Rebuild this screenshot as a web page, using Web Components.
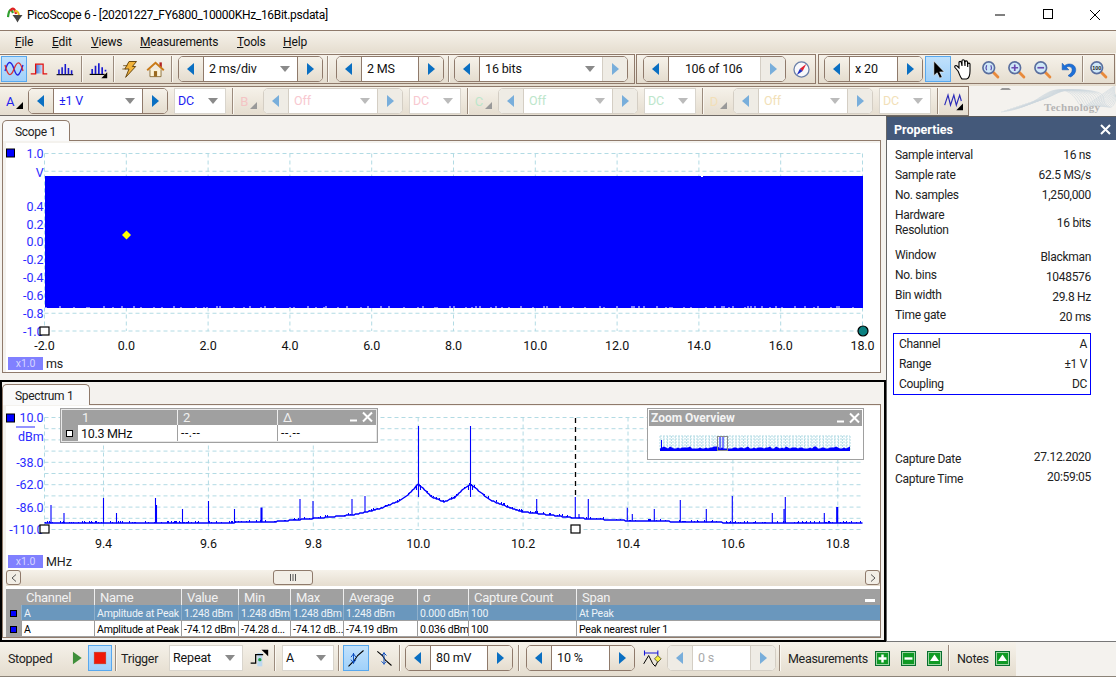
<!DOCTYPE html>
<html>
<head>
<meta charset="utf-8">
<title>PicoScope 6</title>
<style>
  html, body { margin: 0; padding: 0; background: #f4f2ee; }
  body { font: 12px Roboto, "Noto Sans", sans-serif; letter-spacing: -.3px; color: #111; width: 1116px; height: 677px; overflow: hidden; }
  .main { display: flex; height: 526px; }
  .left { width: 886px; flex: none; }
</style>
</head>
<body>

<ps-titlebar>PicoScope 6 - [20201227_FY6800_10000KHz_16Bit.psdata]</ps-titlebar>
<ps-menubar></ps-menubar>

<ps-toolrow h="33">
  <ps-group first w="635" pad="1">
    <ps-tool icon="scope" w="26" size="24" active></ps-tool>
    <ps-tool icon="block" w="24" size="18"></ps-tool>
    <ps-tool icon="bars" w="26" size="19"></ps-tool>
    <ps-sep l="4" r="1"></ps-sep>
    <ps-tool icon="bars2" w="27"></ps-tool>
    <ps-sep l="2" r="1"></ps-sep>
    <ps-tool icon="bolt" w="26"></ps-tool>
    <ps-tool icon="home" w="26" size="19"></ps-tool>
    <ps-sep l="3" r="5"></ps-sep>
    <ps-spinner w="145" value="2 ms/div" caret></ps-spinner>
    <ps-sep l="4" r="7"></ps-sep>
    <ps-spinner w="108" value="2 MS"></ps-spinner>
    <ps-sep l="4" r="4"></ps-sep>
    <ps-spinner w="174" value="16 bits" caret off-right></ps-spinner>
  </ps-group>
  <ps-group w="180" pad="6" style="margin-left:1px">
    <ps-spinner w="143" value="106 of 106" center off-right></ps-spinner>
    <ps-tool icon="compass" w="26" size="19" style="margin-left:2px"></ps-tool>
  </ps-group>
  <ps-group w="297" pad="5" style="margin-left:2px">
    <ps-spinner w="99" value="x 20"></ps-spinner>
    <ps-tool icon="pointer" w="26" active style="margin-left:2px"></ps-tool>
    <ps-tool icon="hand" w="26" size="24"></ps-tool>
    <ps-tool icon="zoomfit" w="26"></ps-tool>
    <ps-tool icon="zoomin" w="26"></ps-tool>
    <ps-tool icon="zoomout" w="26"></ps-tool>
    <ps-tool icon="undo" w="26"></ps-tool>
    <ps-sep l="1" r="1"></ps-sep>
    <ps-tool icon="zoom100" w="26"></ps-tool>
  </ps-group>
</ps-toolrow>

<ps-toolrow h="30" second>
  <ps-group first w="969" pad="0" low>
    <ps-chan color="#2222ee">A</ps-chan>
    <ps-spinner w="140" value="±1 V" caret color="#1c1cf0"></ps-spinner>
    <ps-combo w="52" color="#1c1cf0" style="margin-left:6px">DC</ps-combo>
    <ps-sep l="6" r="0"></ps-sep>
    <ps-chan color="#f4c4c4" faded>B</ps-chan>
    <ps-spinner w="140" value="Off" caret color="#f8c8d0" off-all></ps-spinner>
    <ps-combo w="52" color="#f8c8d0" style="margin-left:6px">DC</ps-combo>
    <ps-sep l="6" r="0"></ps-sep>
    <ps-chan color="#bde6cb" faded>C</ps-chan>
    <ps-spinner w="140" value="Off" caret color="#bde6cb" off-all></ps-spinner>
    <ps-combo w="52" color="#bde6cb" style="margin-left:6px">DC</ps-combo>
    <ps-sep l="6" r="0"></ps-sep>
    <ps-chan color="#f2dfb8" faded>D</ps-chan>
    <ps-spinner w="140" value="Off" caret color="#f2dfb8" off-all></ps-spinner>
    <ps-combo w="52" color="#f2dfb8" style="margin-left:6px">DC</ps-combo>
    <ps-sep l="6" r="0"></ps-sep>
    <ps-tool icon="wave" w="28"></ps-tool>
  </ps-group>
  <ps-logo></ps-logo>
</ps-toolrow>

<div class="main">
  <div class="left">
    <ps-view tab="Scope 1" tabw="68" kind="scope">
      <ps-scope-plot></ps-scope-plot>
    </ps-view>
    <ps-view tab="Spectrum 1" tabw="88" kind="spectrum" framed>
      <ps-spectrum-plot></ps-spectrum-plot>
      <ps-scrollbar></ps-scrollbar>
      <ps-measure-table></ps-measure-table>
    </ps-view>
  </div>
  <ps-properties>
    <ps-prop label="Sample interval">16 ns</ps-prop>
    <ps-prop label="Sample rate">62.5 MS/s</ps-prop>
    <ps-prop label="No. samples">1,250,000</ps-prop>
    <ps-prop label="Hardware Resolution" tall>16 bits</ps-prop>
    <ps-prop label="Window" low>Blackman</ps-prop>
    <ps-prop label="No. bins" low>1048576</ps-prop>
    <ps-prop label="Bin width" low>29.8 Hz</ps-prop>
    <ps-prop label="Time gate" low>20 ms</ps-prop>
    <ps-prop-box>
      <ps-prop label="Channel" inner>A</ps-prop>
      <ps-prop label="Range" inner>±1 V</ps-prop>
      <ps-prop label="Coupling" inner>DC</ps-prop>
    </ps-prop-box>
    <ps-prop label="Capture Date" high style="margin-top:54px">27.12.2020</ps-prop>
    <ps-prop label="Capture Time" high>20:59:05</ps-prop>
  </ps-properties>
</div>

<ps-statusbar>
  <ps-text w="61" style="margin-left:8px">Stopped</ps-text>
  <ps-tool icon="play" w="19"></ps-tool>
  <ps-tool icon="stop" w="24" active></ps-tool>
  <ps-sep l="3" r="4"></ps-sep>
  <ps-text w="48">Trigger</ps-text>
  <ps-combo w="74">Repeat</ps-combo>
  <ps-tool icon="trigstep" w="24" style="margin-left:4px"></ps-tool>
  <ps-sep l="3" r="6"></ps-sep>
  <ps-combo w="52">A</ps-combo>
  <ps-sep l="4" r="3"></ps-sep>
  <ps-tool icon="rising" w="26" active></ps-tool>
  <ps-tool icon="falling" w="25" style="margin-left:2px"></ps-tool>
  <ps-sep l="3" r="4"></ps-sep>
  <ps-spinner w="108" value="80 mV"></ps-spinner>
  <ps-sep l="5" r="6"></ps-sep>
  <ps-spinner w="109" value="10 %"></ps-spinner>
  <ps-tool icon="pretrig" w="24" style="margin-left:5px"></ps-tool>
  <ps-spinner w="109" value="0 s" off-all color="#aaa" style="margin-left:3px"></ps-spinner>
  <ps-sep l="3" r="7"></ps-sep>
  <ps-text w="87">Measurements</ps-text>
  <ps-green kind="plus"></ps-green>
  <ps-green kind="minus" style="margin-left:11px"></ps-green>
  <ps-green kind="up" style="margin-left:11px"></ps-green>
  <ps-sep l="6" r="7"></ps-sep>
  <ps-text w="38">Notes</ps-text>
  <ps-green kind="up"></ps-green>
</ps-statusbar>

<script>
const BROWN = '#8f7a6b';
const BAR_BG = 'linear-gradient(#f6f2ea, #e5ddcf)';

// every toolbar picture sits in a 24x24 box
const ICONS = {
  scope: `<path d="M3 14C6 3 9 3 12 12S17 20 21 8" fill="none" stroke="#2222dd" stroke-width="1.3"/><path d="M3 8C6 20 9 20 12 12S18 3 21 14" fill="none" stroke="#dd3030" stroke-width="1.3"/>`,
  block: `<defs><linearGradient id="b"><stop offset="0" stop-color="#3f7fe0"/><stop offset="1" stop-color="#d8e4f4"/></linearGradient></defs><rect x="8" y="6" width="9" height="12" fill="url(#b)"/><path d="M1 18.5H7.5V5.5H17.5V18.5H23" fill="none" stroke="#e01010" stroke-width="1.7"/>`,
  bars: `<path d="M2 18.5H23" stroke="#000" stroke-width="1.4"/><path d="M5 18V12M9 18V9M13 18V5M17 18V10M21 18V13" stroke="#1818d0" stroke-width="2"/>`,
  bars2: `<path d="M2 18.5H20" stroke="#000" stroke-width="1.4"/><path d="M5 18V12M9 18V8M13 18V5M17 18V10M21 15V13" stroke="#1818d0" stroke-width="2"/><path d="M23 16V23H16Z" fill="#000"/>`,
  bolt: `<path d="M12 3H21L16 9H20L8 22L12 12H7Z" fill="#f2b33a" stroke="#6b4a10" stroke-width="1.2"/><path d="M5 8H10M4 12H8" stroke="#6b4a10"/>`,
  home: `<path d="M17 3h3v6h-3z" fill="#b02020"/><path d="M5 12V21H19V12" fill="#fbf3d8" stroke="#7a5a20"/><path d="M1.5 13L12 3.5L22.5 13" fill="none" stroke="#c97a18" stroke-width="2.4"/><path d="M10 21V14H14V21" fill="#9a6a20"/>`,
  compass: `<circle cx="12" cy="12" r="9.5" fill="#f8f8fb" stroke="#6a7fa8" stroke-width="1.6"/><path d="M18 5L13.5 14L10 11Z" fill="#e02030"/><path d="M6 19L10 11L13.5 14Z" fill="#2030c0"/>`,
  pointer: `<path d="M7 2.5V20L11 16.5L14 23L17 21.5L14 15.5H19.5Z" fill="#000" stroke="#fff" stroke-width=".7"/>`,
  hand: `<path d="M6 14L3 10.5C2 9 4 8 5 9L7 11V5.5C7 4 9 4 9.3 5.5L10 9V3.8C10 2.4 12.3 2.4 12.5 3.8L13 9V4.8C13.2 3.5 15.4 3.5 15.5 5L15.7 10V7C16 5.8 18 5.8 18 7.2L18 14C18 18 16.5 21.5 14.5 22H10C8 20 7.5 17 6 14Z" fill="#fff" stroke="#000" stroke-width="1.1"/>`,
  play: `<path d="M5 4L16 12L5 20Z" fill="#3f8f3a"/>`,
  stop: `<rect x="5" y="5" width="14" height="14" fill="#f01808" stroke="#c04020" stroke-width=".6"/>`,
  undo: `<path d="M5 5V13H13L10 10C13 8 17 9.5 17 13C17 16 15 18 12 20L15 21.5C20 19 22 15 21 11C19.5 5.5 12 4.5 8 8Z" fill="#1c6fd8" stroke="#1250a8" stroke-width=".6"/>`,
  wave: `<path d="M2 17L6 5L9 17L13 5L16 17L20 5L22 12" fill="none" stroke="#2a2ab8" stroke-width="1.4"/><path d="M24 15V23H16Z" fill="#000"/>`,
  trigstep: `<path d="M10 6h6v16h-6z" fill="#bcd8f0"/><path d="M2 18H8V8H17" fill="none" stroke="#000" stroke-width="1.5"/><path d="M15 2H23V10Z" fill="#000"/><circle cx="13" cy="14" r="2" fill="#20a040"/>`,
  rising: `<path d="M3 22L10 15L14 9L21 3" fill="none" stroke="#000" stroke-width="1.3"/><path d="M9 6V19M6 11L9 7L12 11M6 14L9 18L12 14" fill="none" stroke="#1050c0" stroke-width="1.2"/>`,
  falling: `<path d="M4 4L10 9L14 15L21 21" fill="none" stroke="#000" stroke-width="1.3"/><path d="M12 5V20M9 9L12 6L15 9M9 16L12 19L15 16" fill="none" stroke="#1050c0" stroke-width="1.2"/>`,
  pretrig: `<path d="M3 6H19M3 3V9M19 3V9" stroke="#1818d8" stroke-width="1.3"/><path d="M2 19L8 9L13 19L16 22L19 16" fill="none" stroke="#000" stroke-width="1.2"/><path d="M19 9L23 13L19 17L15 13Z" fill="#f8f040" stroke="#000" stroke-width=".7"/>`
};
function glass(inner) {
  return `<path d="M15 15L21.5 21.5" stroke="#e88a3c" stroke-width="3.4" stroke-linecap="round"/><circle cx="10.5" cy="10.5" r="7" fill="#cfe8f8" stroke="#5a6e9e" stroke-width="2"/>${inner}`;
}
ICONS.zoomfit = glass('<path d="M8 7.5C7 9.5 7 11.5 8 13.5M13 7.5C14 9.5 14 11.5 13 13.5" fill="none" stroke="#5a4fb0" stroke-width="1.5"/>');
ICONS.zoomin = glass('<path d="M6.5 10.5H14.5M10.5 6.5V14.5" stroke="#6a4ab0" stroke-width="2"/>');
ICONS.zoomout = glass('<path d="M6.5 10.5H14.5" stroke="#6a4ab0" stroke-width="2"/>');
ICONS.zoom100 = glass('<text x="10.5" y="13" font-size="6.5" font-weight="700" text-anchor="middle" fill="#222" font-family="Liberation Sans" letter-spacing="0">100</text>');

class PsTitlebar extends HTMLElement {
  connectedCallback() {
    this.attachShadow({mode: 'open'}).innerHTML = `
      <style>
        :host { display: flex; align-items: center; height: 30px; background: #fff; border-bottom: 1px solid ${BROWN}; font-size: 12px; }
        svg { margin: 0 4px 0 7px; flex: none; }
        .txt { flex: 1; color: #000; }
        .win { display: flex; margin-right: -2px; }
        .win svg { margin: 0; width: 47px; height: 30px; }
      </style>
      <svg width="16" height="16" viewBox="0 0 16 16">
        <path d="M1 10C2 2 4 1 6 6" fill="none" stroke="#30a030" stroke-width="2.2"/>
        <path d="M3.5 4C5 0 8 1 9 7" fill="none" stroke="#e02020" stroke-width="2.2"/>
        <path d="M8 5C9 3 11 4 12 8" fill="none" stroke="#e8c020" stroke-width="2"/>
        <path d="M5.5 8H15.5L12.5 12L10.5 15.5L8.5 12Z" fill="#444"/>
      </svg>
      <span class="txt"><slot></slot></span>
      <span class="win">
        <svg viewBox="0 0 47 30"><path d="M18 15H28" stroke="#000"/></svg>
        <svg viewBox="0 0 47 30"><rect x="19.5" y="9.5" width="9" height="9" fill="none" stroke="#000"/></svg>
        <svg viewBox="0 0 47 30"><path d="M19 10L29 20M29 10L19 20" stroke="#000" fill="none"/></svg>
      </span>`;
  }
}

class PsMenubar extends HTMLElement {
  connectedCallback() {
    const items = [['F', 'ile', 37], ['E', 'dit', 39], ['V', 'iews', 49], ['M', 'easurements', 97], ['T', 'ools', 46], ['H', 'elp', 40]];
    this.attachShadow({mode: 'open'}).innerHTML = `
      <style>
        :host { display: flex; align-items: center; height: 22px; padding-left: 15px; background: ${BAR_BG}; box-sizing: border-box; color: #111; letter-spacing: -.15px; }
        span { flex: none; }
      </style>
      ${items.map(i => `<span style="width:${i[2]}px"><u>${i[0]}</u>${i[1]}</span>`).join('')}`;
  }
}

class PsToolrow extends HTMLElement {
  connectedCallback() {
    const second = this.hasAttribute('second');
    this.attachShadow({mode: 'open'}).innerHTML = `
      <style>
        :host { display: flex; align-items: stretch; height: ${this.getAttribute('h')}px; box-sizing: border-box;
                background: ${second ? '#f4f2ee' : BAR_BG}; padding-top: ${second ? 0 : 1}px; padding-bottom: ${second ? 0 : 2}px; }
      </style>
      <slot></slot>`;
  }
}

class PsGroup extends HTMLElement {
  connectedCallback() {
    const first = this.hasAttribute('first');
    const low = this.hasAttribute('low');
    this.attachShadow({mode: 'open'}).innerHTML = `
      <style>
        :host { display: flex; align-items: center; flex: none; box-sizing: border-box; width: ${this.getAttribute('w')}px;
                padding-left: ${this.getAttribute('pad')}px; background: ${BAR_BG};
                border: 1px solid ${BROWN}; ${first ? 'border-left: 0;' : ''} ${low ? 'border-bottom-color: #6f6a66;' : ''} }
      </style>
      <slot></slot>`;
  }
}

class PsSep extends HTMLElement {
  connectedCallback() {
    this.attachShadow({mode: 'open'}).innerHTML = `
      <style>
        :host { display: block; flex: none; width: 1px; height: 26px; background: #9b8b7d; border-right: 1px solid #fbf8f2;
                margin: 0 ${this.getAttribute('r')}px 0 ${this.getAttribute('l')}px; }
      </style>`;
  }
}

class PsTool extends HTMLElement {
  connectedCallback() {
    const active = this.hasAttribute('active');
    const size = this.getAttribute('size') || 20;
    this.attachShadow({mode: 'open'}).innerHTML = `
      <style>
        :host { display: flex; flex: none; align-items: center; justify-content: center; box-sizing: border-box; height: 26px;
                width: ${this.getAttribute('w')}px;
                ${active ? 'background: linear-gradient(#c2e2fc, #9fd0fa); outline: 1px solid #58a8ee; outline-offset: -1px;' : ''} }
      </style>
      <svg width="${size}" height="${size}" viewBox="0 0 24 24">${ICONS[this.getAttribute('icon')]}</svg>`;
  }
}

class PsSpinner extends HTMLElement {
  connectedCallback() {
    const w = this.getAttribute('w');
    const allOff = this.hasAttribute('off-all');
    const rightOff = allOff || this.hasAttribute('off-right');
    const caret = this.hasAttribute('caret');
    const center = this.hasAttribute('center');
    const color = this.getAttribute('color') || '#111';
    this.attachShadow({mode: 'open'}).innerHTML = `
      <style>
        :host { display: flex; flex: none; box-sizing: border-box; height: 26px; width: ${w}px; overflow: hidden;
                border: 1px solid ${allOff ? '#d4cec4' : BROWN}; border-radius: 5px; background: #fff; }
        .b { flex: none; width: 24px; display: flex; align-items: center; justify-content: center; background: ${BAR_BG}; }
        .b.off { background: #efece5; }
        .l { border-right: 1px solid ${allOff ? '#d4cec4' : BROWN}; }
        .r { border-left: 1px solid ${rightOff ? '#d4cec4' : BROWN}; }
        .v { flex: 1; display: flex; align-items: center; padding: 0 7px 2px 5px; color: ${color}; min-width: 0; font-size: 12.5px;
             letter-spacing: ${center ? '-.5px' : '-.15px'}; word-spacing: ${center ? '1px' : '0'}; justify-content: ${center ? 'center' : 'flex-start'}; }
        .t { flex: 1; }
        .c { flex: none; width: 0; height: 0; border: 5.5px solid transparent; border-top: 6px solid ${allOff ? '#bbb' : '#8a8a8a'}; border-bottom: 0; margin-top: 2px; }
      </style>
      <div class="b l ${allOff ? 'off' : ''}"><svg width="8" height="12"><path d="M7 0V12L0 6Z" fill="${allOff ? '#78aedb' : '#0a6fc2'}"/></svg></div>
      <div class="v"><span class="${center ? '' : 't'}">${this.getAttribute('value')}</span>${caret ? '<span class="c"></span>' : ''}</div>
      <div class="b r ${rightOff ? 'off' : ''}"><svg width="8" height="12"><path d="M1 0V12L8 6Z" fill="${rightOff ? '#78aedb' : '#0a6fc2'}"/></svg></div>`;
  }
}

class PsCombo extends HTMLElement {
  connectedCallback() {
    const color = this.getAttribute('color') || '#111';
    this.attachShadow({mode: 'open'}).innerHTML = `
      <style>
        :host { display: flex; flex: none; align-items: center; box-sizing: border-box; height: 26px; width: ${this.getAttribute('w')}px;
                background: #fff; border: 1px solid #d9d5cd; color: ${color}; padding: 0 7px 2px 3px; font-size: 12.5px; letter-spacing: -.15px; }
        .t { flex: 1; }
        .c { width: 0; height: 0; border: 5.5px solid transparent; border-top: 6px solid ${color === '#111' || color === '#1c1cf0' ? '#8a8a8a' : '#bbb'}; border-bottom: 0; margin-top: 2px; }
      </style>
      <span class="t"><slot></slot></span><span class="c"></span>`;
  }
}

class PsChan extends HTMLElement {
  connectedCallback() {
    const faded = this.hasAttribute('faded');
    this.attachShadow({mode: 'open'}).innerHTML = `
      <style>
        :host { display: flex; flex: none; box-sizing: border-box; width: ${faded ? 29 : 28}px; height: 26px; align-items: center;
                justify-content: ${faded ? 'flex-end' : 'flex-start'}; padding: ${faded ? '0 15px 0 0' : '0 0 0 6px'};
                color: ${this.getAttribute('color')}; font-size: 13px; }
        svg { margin: 8px 0 0 2px; flex: none; }
      </style>
      <slot></slot><svg width="7" height="7" style="${faded ? 'margin-right:-9px' : ''}"><path d="M7 0V7H0Z" fill="${faded ? '#999' : '#000'}"/></svg>`;
  }
}

class PsLogo extends HTMLElement {
  connectedCallback() {
    let curves = '';
    for (let i = 0; i < 12; i++) {
      curves += `<path d="M${2 + i * 3} ${26 - i}C${38 + i * 2} ${22 - i}, ${44 + i} 2, ${62 + i * 2} 4S${78 + i * 2} ${24 - i}, ${86 + i * 2} 20S${108 + i} 4, 116 ${i}" fill="none" stroke="#cdd6de" stroke-width=".6"/>`;
    }
    this.attachShadow({mode: 'open'}).innerHTML = `
      <style>
        :host { display: block; flex: 1; background: #f4f2ee; }
        svg { display: block; }
        text { font: 700 11px "Liberation Serif", serif; fill: #b4b4b4; letter-spacing: .3px; }
      </style>
      <svg width="147" height="30" viewBox="0 0 147 30">
        <g transform="translate(30 0)">${curves}</g>
        <path d="M33 2H40L42 4H31Z" fill="#999"/>
        <text x="75" y="25">Technology</text>
      </svg>`;
  }
}

class PsView extends HTMLElement {
  connectedCallback() {
    const framed = this.hasAttribute('framed');
    this.attachShadow({mode: 'open'}).innerHTML = `
      <style>
        :host { display: block; box-sizing: border-box; background: #f4f2ee;
                ${framed ? 'height: 262px; border: 2px solid #000; padding-top: 2px;' : 'height: 264px; padding: 4px 0 0 2px;'} }
        .tab { box-sizing: border-box; width: ${this.getAttribute('tabw')}px; height: 21px; margin-bottom: -1px; position: relative; z-index: 1;
               display: flex; align-items: center; padding: 2px 0 0 12px; color: #222; background: #fafafa;
               border: 1px solid ${BROWN}; border-bottom: 0; border-radius: 5px 5px 0 0; }
        .panel { box-sizing: border-box; width: 879px; border: 1px solid ${BROWN}; padding: ${framed ? 1 : 2}px 0 0 3px; background: #f4f2ee; }
      </style>
      <div class="tab">${this.getAttribute('tab')}</div>
      <div class="panel"><slot></slot></div>`;
  }
}

// small shared helpers for the two plots, coordinates are window pixels
function dashes(d) {
  return `<path d="${d}" stroke="#b2dbe4" stroke-dasharray="4 3" fill="none"/>`;
}
function label(x, y, s, anchor, fill) {
  return `<text x="${x}" y="${y + 4.5}" text-anchor="${anchor}" fill="${fill}">${s}</text>`;
}
function handle(x, y) {
  return `<rect x="${x - 4.5}" y="${y - 4}" width="9" height="8" fill="#fff" stroke="#000" stroke-width="1.2"/>`;
}
function chip(y, unit) {
  return `<rect x="8" y="${y}" width="35" height="13" fill="#8080ff"/>` +
    `<text x="25.5" y="${y + 10}" text-anchor="middle" font-size="10.5" fill="#d5d5ff">x1.0</text>` + label(46, y + 6.5, unit, 'start', '#222');
}
function channelSquare(y) {
  return `<rect x="6.5" y="${y}" width="8" height="8" fill="#0000ff" stroke="#000"/>`;
}
function random(seed) {
  let s = seed;
  return () => { s = (s * 1664525 + 1013904223) % 4294967296; return s / 4294967296; };
}
const PLOT_STYLE = `<style>:host { display: block; } svg { display: block; font-size: 12.5px; letter-spacing: -.1px; } </style>`;
const AXIS_BLUE = '#2b2bff';

class PsScopePlot extends HTMLElement {
  connectedCallback() {
    const xs = [], ys = [];
    for (let i = 0; i <= 10; i++) { xs.push(44.5 + i * 81.8); ys.push(153.5 + i * 17.75); }
    const rnd = random(7);
    let ticks = '';
    for (let x = 46; x < 862; x += 2 + Math.floor(rnd() * 14)) {
      ticks += `M${x} 308v-${1 + Math.floor(rnd() * 2)}`;
    }
    const yl = [[153, '1.0'], [172, 'V'], [206, '0.4'], [224, '0.2'], [241, '0.0'], [259, '-0.2'], [277, '-0.4'], [295, '-0.6'], [313, '-0.8'], [331, '-1.0']];
    const xl = ['-2.0', '0.0', '2.0', '4.0', '6.0', '8.0', '10.0', '12.0', '14.0', '16.0', '18.0'];
    this.attachShadow({mode: 'open'}).innerHTML = PLOT_STYLE + `
      <svg width="874" height="229" viewBox="6 143 874 229">
        <rect x="6" y="143" width="874" height="229" fill="#fff"/>
        ${dashes(xs.map(x => `M${x} 153.5V331`).join('') + ys.map(y => `M44.5 ${y}H862.5`).join(''))}
        <rect x="45" y="176" width="818" height="132" fill="#0000ff"/>
        <path d="${ticks}" stroke="#fff" fill="none"/>
        <path d="M701 176.5h2" stroke="#fff"/>
        <path d="M126.5 230.5L131 235L126.5 239.5L122 235Z" fill="#ffff00"/>
        ${channelSquare(149)}
        ${yl.map(l => label(43.5, l[0], l[1], 'end', AXIS_BLUE)).join('')}
        ${xl.map((s, i) => label(xs[i], 345, s, 'middle', '#111')).join('')}
        ${handle(44.5, 331)}
        <circle cx="863" cy="331" r="5" fill="#0a8080" stroke="#000" stroke-width="1.2"/>
        ${chip(357, 'ms')}
      </svg>`;
  }
}

const SKIRT = [[45, 523.3], [200, 523], [270, 522], [313, 518.5], [352, 515], [380, 508.7], [400, 500.5], [410, 493], [418.3, 484], [425, 490], [432, 497], [444, 501.7], [454, 498], [462, 490], [470.3, 484], [479, 491], [490, 500], [513, 509], [522, 511.7], [550, 515], [575, 518], [628, 520.7], [680, 521.7], [733, 522.7], [863, 523]];
const SPIKES = [[51, 505], [64, 513], [103.5, 498], [116.5, 513], [155.5, 498], [156.5, 505], [182.5, 509], [208.5, 501], [234.5, 509], [261, 507.5], [262, 507.5], [300, 499], [313, 501], [352, 499], [365, 496], [536.7, 499], [575.3, 497], [579, 514], [588.3, 499], [627.3, 507.7], [632.3, 514], [654.3, 509], [680.3, 500], [706.3, 509], [732.3, 496], [772.3, 513], [785.3, 497], [784, 509], [824.3, 513], [836.7, 507], [837.7, 507]];

function skirtAt(x) {
  for (let i = 1; i < SKIRT.length; i++) {
    if (x <= SKIRT[i][0]) {
      const a = SKIRT[i - 1], b = SKIRT[i];
      return a[1] + (b[1] - a[1]) * (x - a[0]) / (b[0] - a[0]);
    }
  }
  return 523;
}

class PsSpectrumPlot extends HTMLElement {
  connectedCallback() {
    const vx = [], ys = [];
    for (let i = 0; i < 8; i++) vx.push(103.5 + i * 104.9);
    for (let i = 0; i <= 10; i++) ys.push(417.5 + i * 11.2);
    const rnd = random(11);
    let base = 'M45 ' + skirtAt(45).toFixed(1), grass = '', spikes = '';
    for (let x = 45; x <= 863; x += 1.5) base += `L${x} ${Math.round(skirtAt(x))}`;
    for (let x = 45; x <= 863; x++) {
      if (rnd() < 0.3) grass += `M${x}.5 ${skirtAt(x).toFixed(0)}v-${1 + Math.floor(rnd() * 2)}`;
    }
    SPIKES.forEach(s => { spikes += `M${s[0]} ${skirtAt(s[0])}V${s[1]}`; });
    const yl = [[417, '10.0'], [436, 'dBm'], [462, '-38.0'], [484, '-62.0'], [507, '-86.0'], [529, '-110.0']];
    const xl = ['9.4', '9.6', '9.8', '10.0', '10.2', '10.4', '10.6', '10.8'];
    this.attachShadow({mode: 'open'}).innerHTML = PLOT_STYLE + `
      <style>
        :host { position: relative; }
        ps-ruler-legend { position: absolute; left: 54px; top: 2px; }
        ps-zoom-overview { position: absolute; left: 641px; top: 2px; }
      </style>
      <svg width="874" height="164" viewBox="6 406 874 164">
        <rect x="6" y="406" width="874" height="164" fill="#fff"/>
        ${dashes(ys.map(y => `M44.5 ${y}H863`).join('') + vx.map(x => `M${x} 417.5V529.5`).join('') + 'M44.5 417.5V529.5')}
        <path d="M575.5 418V497" stroke="#000" stroke-width="1.3" stroke-dasharray="5 4"/>
        <path d="${grass}" stroke="#0000ff" fill="none"/>
        <path d="${base}" stroke="#0000ff" stroke-width="1.5" fill="none"/>
        <path d="${spikes}" stroke="#0000ff" stroke-width="1.1" fill="none"/>
        <path d="M418.5 426V497M470.5 426V497M416.5 485V490M420.5 485V490M468.5 485V490M472.5 485V490" stroke="#0000ff" stroke-width="1.1" fill="none"/>
        ${channelSquare(414)}
        <path d="M16 427H35" stroke="#2b2bff"/>
        ${yl.map(l => label(43.5, l[0], l[1], 'end', AXIS_BLUE)).join('')}
        ${xl.map((s, i) => label(vx[i], 543, s, 'middle', '#111')).join('')}
        ${handle(44.5, 529)}
        ${handle(575.5, 529)}
        ${chip(555, 'MHz')}
      </svg>
      <ps-ruler-legend></ps-ruler-legend>
      <ps-zoom-overview></ps-zoom-overview>`;
  }
}

const MINI_CLOSE = `<svg width="24" height="12" viewBox="0 0 24 12"><path d="M1 9.5H8" stroke="#fff" stroke-width="2"/><path d="M14 1.5L23 10.5M23 1.5L14 10.5" stroke="#fff" stroke-width="2"/></svg>`;

class PsRulerLegend extends HTMLElement {
  connectedCallback() {
    this.attachShadow({mode: 'open'}).innerHTML = `
      <style>
        :host { display: grid; grid-template-columns: 16px 100px 100px 100px; grid-template-rows: 16px 16px; box-sizing: border-box; width: 318px; height: 35px;
                border: 1px solid #a0a0a0; outline: 1px solid #e8e8e8; outline-offset: -2px; background: #a0a0a0; color: #111; }
        div { display: flex; align-items: center; padding-left: 3px; box-sizing: border-box; }
        .h { color: #f0f0f0; border-left: 1px solid #eee; font-size: 13px; padding-left: 5px; justify-content: space-between; padding-right: 4px; }
        .h.first { border-left: 0; }
        .c { background: #fff; border-left: 1px solid #a0a0a0; }
        .d { letter-spacing: .6px; }
        .k { justify-content: center; padding: 0; }
        .s { width: 5px; height: 5px; background: #fff; border: 1px solid #000; }
      </style>
      <div></div><div class="h first">1</div><div class="h">2</div><div class="h">Δ ${MINI_CLOSE}</div>
      <div class="k"><span class="s"></span></div><div class="c" style="font-size:12.5px">10.3 MHz</div><div class="c d">--.--</div><div class="c d">--.--</div>`;
  }
}

class PsZoomOverview extends HTMLElement {
  connectedCallback() {
    const rnd = random(3);
    let band = 'M660 451';
    for (let x = 660; x <= 850; x += 2) band += `L${x} ${448.5 - Math.floor(rnd() * 2.4)}`;
    band += 'L850 451Z';
    const vs = [], hs = [436, 439, 442, 445, 448];
    for (let x = 660; x <= 850; x += 3.8) vs.push(x);
    this.attachShadow({mode: 'open'}).innerHTML = `
      <style>
        :host { display: block; box-sizing: border-box; width: 217px; height: 52px; background: #fff; border: 1px solid #a0a0a0; padding: 1px; }
        .t { display: flex; align-items: center; justify-content: space-between; height: 16px; background: #a0a0a0; color: #f4f4f4; font-weight: 700; padding: 0 2px 0 2px; font-size: 12px; letter-spacing: 0; }
        svg.m { display: block; }
      </style>
      <div class="t"><span>Zoom Overview</span>${MINI_CLOSE}</div>
      <svg class="m" width="213" height="32" viewBox="649 426 213 32">
        <path d="${vs.map(x => `M${x} 436V451`).join('')}${hs.map(y => `M660 ${y}H850`).join('')}" stroke="#b2dbe4" stroke-dasharray="2 1" fill="none"/>
        <path d="${band}" fill="#0000ff"/>
        <path d="M661.5 448V440M720 448V436M723 448V436" stroke="#0000ff"/>
        <rect x="717.5" y="436.5" width="10" height="14" fill="none" stroke="#888"/>
      </svg>`;
  }
}

class PsScrollbar extends HTMLElement {
  connectedCallback() {
    const btn = 'flex: none; box-sizing: border-box; width: 15px; height: 15px; border: 1px solid ' + BROWN + '; border-radius: 3px; background: #f2eee6; display: flex; align-items: center; justify-content: center;';
    this.attachShadow({mode: 'open'}).innerHTML = `
      <style>
        :host { display: flex; align-items: flex-start; width: 874px; height: 16px; box-sizing: border-box; background: ${BAR_BG}; margin-bottom: 3px; box-shadow: 0 3px 0 #fff; }
        .b { ${btn} }
        .th { ${btn} width: 40px; margin-left: 252px; }
        .sp { flex: 1; }
      </style>
      <div class="b"><svg width="6" height="8"><path d="M5 .5L1 4L5 7.5" fill="none" stroke="#555"/></svg></div>
      <div class="th"><svg width="8" height="7"><path d="M1.5 0V7M4 0V7M6.5 0V7" stroke="#555"/></svg></div>
      <div class="sp"></div>
      <div class="b"><svg width="6" height="8"><path d="M1 .5L5 4L1 7.5" fill="none" stroke="#555"/></svg></div>`;
  }
}

class PsMeasureTable extends HTMLElement {
  connectedCallback() {
    const heads = ['Channel', 'Name', 'Value', 'Min', 'Max', 'Average', 'σ', 'Capture Count', 'Span'];
    const rows = [
      ['A', 'Amplitude at Peak', '1.248 dBm', '1.248 dBm', '1.248 dBm', '1.248 dBm', '0.000 dBm', '100', 'At Peak'],
      ['A', 'Amplitude at Peak', '-74.12 dBm', '-74.28 d...', '-74.12 dB...', '-74.19 dBm', '0.036 dBm', '100', 'Peak nearest ruler 1']
    ];
    const key = '<div class="k"><span class="s"></span></div>';
    this.attachShadow({mode: 'open'}).innerHTML = `
      <style>
        :host { display: grid; grid-template-columns: 15px 73px 87px 57px 52px 53px 74px 51px 108px 304px; grid-template-rows: 16px 16px 16px; width: 874px; height: 48px; background: #a0a0a0; box-shadow: 0 -3px 0 #fff; }
        div { display: flex; align-items: center; box-sizing: border-box; white-space: nowrap; overflow: hidden; }
        .h { color: #f2f2f2; font-size: 13px; padding-left: 5px; border-left: 1px solid #eee; position: relative; }
        .h.f { border-left: 0; padding-left: 5px; }
        .h .min { position: absolute; right: 5px; top: 10px; width: 10px; height: 3px; background: #fff; }
        .r1 { background: #6a97bd; color: #edf3f8; }
        .r2 { background: #fff; color: #000; }
        .c { font-size: 10.5px; letter-spacing: -.2px; padding: 1px 0 0 2px; border-left: 1px solid #9c9c9c; margin-bottom: 1px; }
        .r1.c { border-left-color: #8fb0cc; }
        .k { justify-content: center; }
        .s { width: 5px; height: 5px; background: #0000ff; border: 1px solid #000; }
      </style>
      <div></div>${heads.map((h, i) => `<div class="h ${i === 0 ? 'f' : ''}">${h}${i === 8 ? '<span class="min"></span>' : ''}</div>`).join('')}
      ${rows.map((r, n) => key + r.map(c => `<div class="c r${n + 1}">${c}</div>`).join('')).join('')}`;
  }
}

class PsProperties extends HTMLElement {
  connectedCallback() {
    this.attachShadow({mode: 'open'}).innerHTML = `
      <style>
        :host { display: block; flex: 1; box-sizing: border-box; background: #fff; border-left: 1px solid #666; border-top: 1px solid #5c5c5c; border-bottom: 1px solid #777; }
        .h { display: flex; align-items: center; justify-content: space-between; box-sizing: border-box; height: 23px; padding: 1px 5px 0 7px; background: #44597a; color: #fff; font-weight: 700; font-size: 12.5px; letter-spacing: 0; }
        .b { padding: 5px 25px 0 8px; }
      </style>
      <div class="h"><span>Properties</span><svg width="11" height="11"><path d="M1 1L10 10M10 1L1 10" stroke="#fff" stroke-width="2"/></svg></div>
      <div class="b"><slot></slot></div>`;
  }
}

class PsProp extends HTMLElement {
  connectedCallback() {
    const tall = this.hasAttribute('tall');
    const shift = this.hasAttribute('low') ? 'padding-top: 3px;' : this.hasAttribute('high') ? 'padding-bottom: 4px;' : '';
    const inner = this.hasAttribute('inner');
    this.attachShadow({mode: 'open'}).innerHTML = `
      <style>
        :host { display: flex; align-items: center; justify-content: space-between; height: ${tall ? 30 : 20}px; ${tall ? 'margin: 2.5px 0 7.5px;' : ''} ${inner ? 'padding: 0 3px 0 5px;' : ''} color: #222; }
        .l { width: ${tall ? '80px' : 'auto'}; line-height: 15px; }
        .v { ${shift} }
      </style>
      <span class="l">${this.getAttribute('label')}</span><span class="v"><slot></slot></span>`;
  }
}

class PsPropBox extends HTMLElement {
  connectedCallback() {
    this.attachShadow({mode: 'open'}).innerHTML = `
      <style>
        :host { display: block; box-sizing: border-box; margin: 8px 0 0 -2px; height: 62px; border: 1px solid #0000ff; }
      </style>
      <slot></slot>`;
  }
}

class PsStatusbar extends HTMLElement {
  connectedCallback() {
    this.attachShadow({mode: 'open'}).innerHTML = `
      <style>
        :host { display: flex; align-items: center; height: 35px; box-sizing: border-box; padding-bottom: 2px; background: linear-gradient(90deg, transparent 1016px, #f4f2ee 1016px), ${BAR_BG}; border-bottom: 1px solid #8b8378; }
      </style>
      <slot></slot>`;
  }
}

class PsText extends HTMLElement {
  connectedCallback() {
    this.attachShadow({mode: 'open'}).innerHTML = `
      <style>:host { display: block; flex: none; width: ${this.getAttribute('w')}px; color: #222; font-size: 12.5px; }</style><slot></slot>`;
  }
}

class PsGreen extends HTMLElement {
  connectedCallback() {
    const marks = {
      plus: '<path d="M7.5 3.5V11.5M3.5 7.5H11.5" stroke="#fff" stroke-width="2.4"/>',
      minus: '<path d="M3.5 7.5H11.5" stroke="#fff" stroke-width="2.4"/>',
      up: '<path d="M7.5 3.5L12 10H3Z" fill="#fff"/>'
    };
    this.attachShadow({mode: 'open'}).innerHTML = `
      <style>:host { display: block; flex: none; width: 15px; height: 15px; } svg { display: block; }</style>
      <svg width="15" height="15"><rect x=".5" y=".5" width="14" height="14" fill="#0f9a24" stroke="#0a6e30"/><rect x="1.5" y="1.5" width="12" height="12" fill="none" stroke="#d8eed8" stroke-opacity=".7"/>${marks[this.getAttribute('kind')]}</svg>`;
  }
}

customElements.define('ps-titlebar', PsTitlebar);
customElements.define('ps-menubar', PsMenubar);
customElements.define('ps-toolrow', PsToolrow);
customElements.define('ps-group', PsGroup);
customElements.define('ps-sep', PsSep);
customElements.define('ps-tool', PsTool);
customElements.define('ps-spinner', PsSpinner);
customElements.define('ps-combo', PsCombo);
customElements.define('ps-chan', PsChan);
customElements.define('ps-logo', PsLogo);
customElements.define('ps-view', PsView);
customElements.define('ps-scope-plot', PsScopePlot);
customElements.define('ps-spectrum-plot', PsSpectrumPlot);
customElements.define('ps-ruler-legend', PsRulerLegend);
customElements.define('ps-zoom-overview', PsZoomOverview);
customElements.define('ps-scrollbar', PsScrollbar);
customElements.define('ps-measure-table', PsMeasureTable);
customElements.define('ps-properties', PsProperties);
customElements.define('ps-prop', PsProp);
customElements.define('ps-prop-box', PsPropBox);
customElements.define('ps-statusbar', PsStatusbar);
customElements.define('ps-text', PsText);
customElements.define('ps-green', PsGreen);
</script>
</body>
</html>
